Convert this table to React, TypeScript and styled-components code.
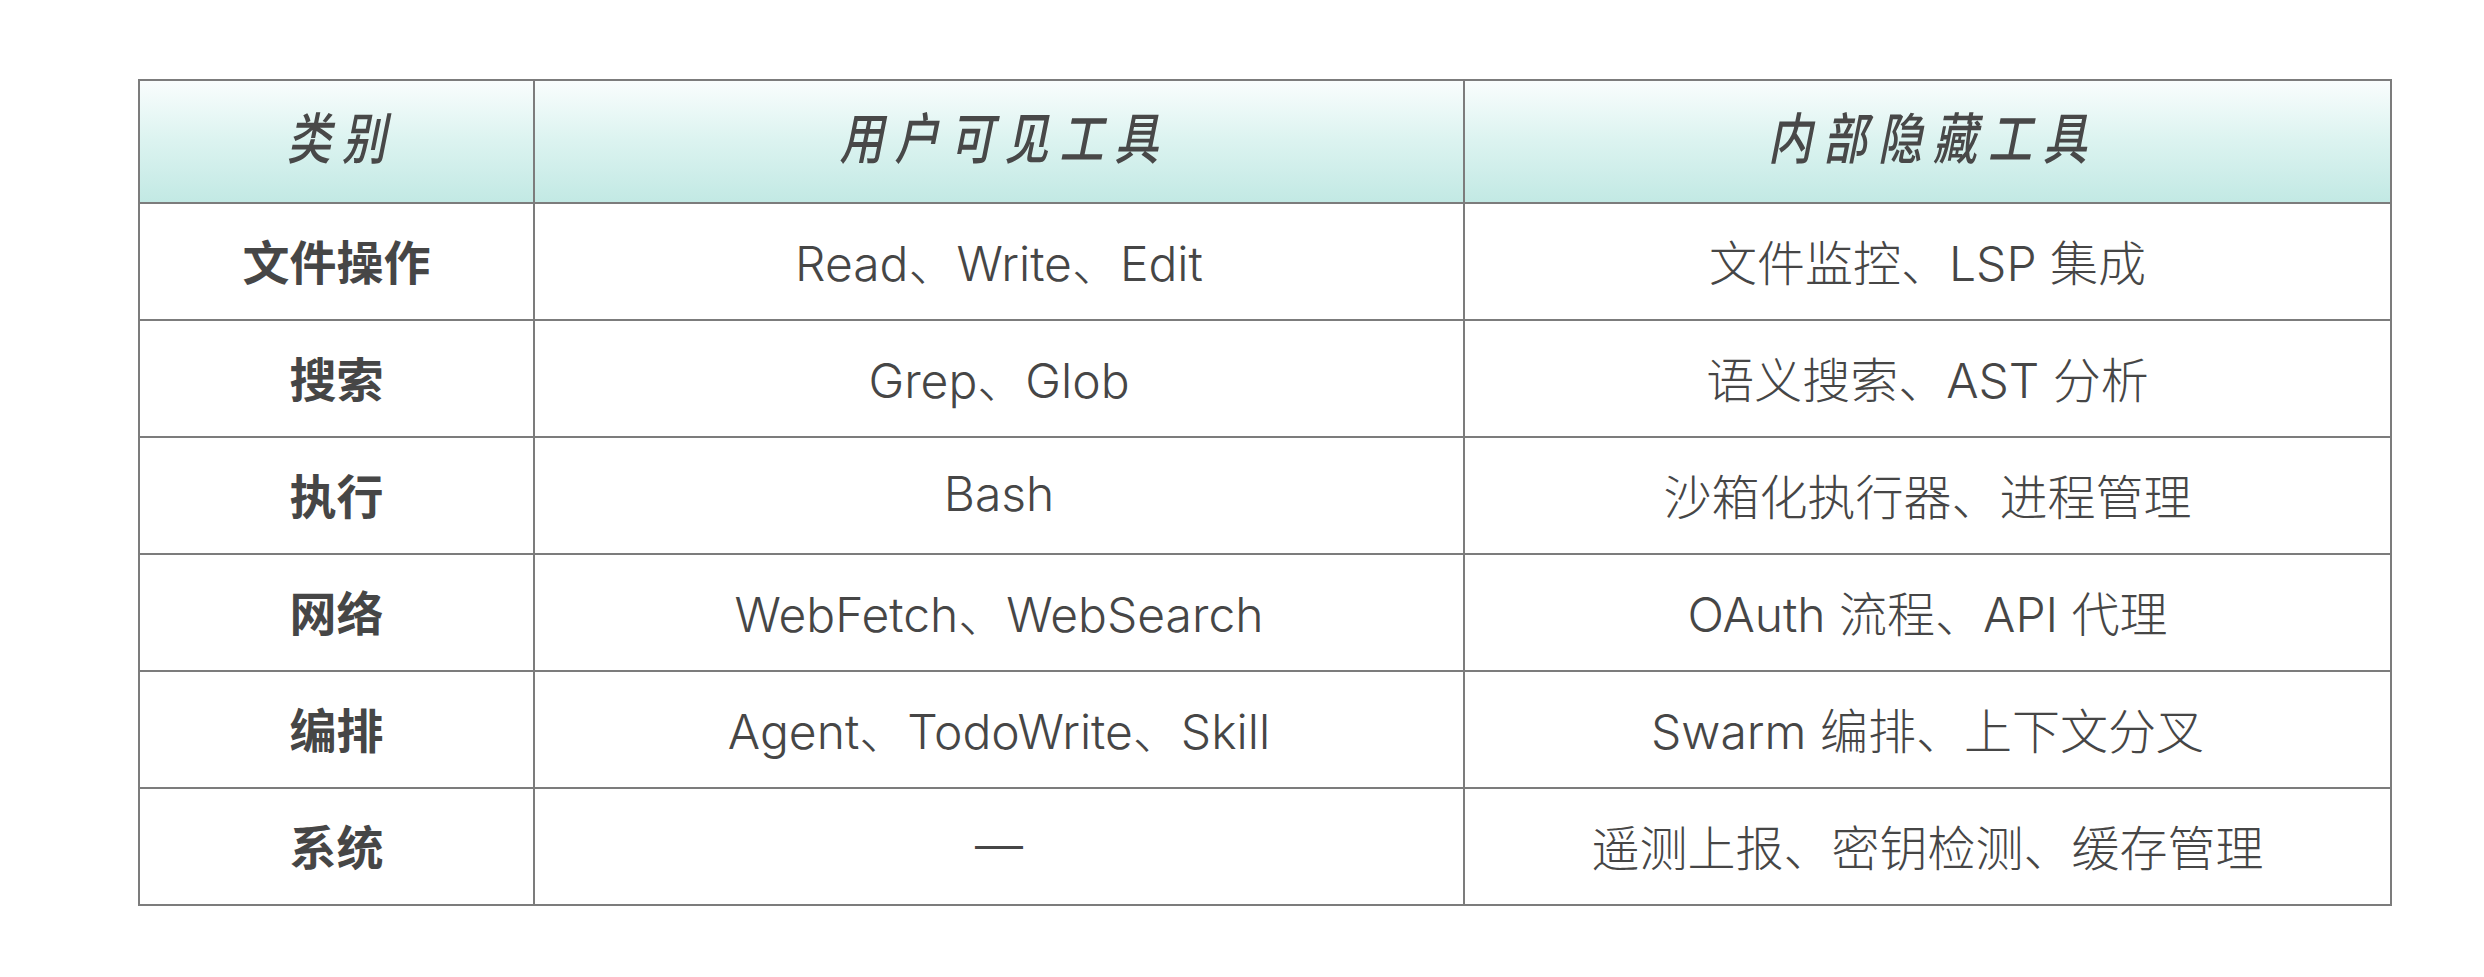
import React from 'react';
import styled, {createGlobalStyle} from 'styled-components';

const GlobalStyle = createGlobalStyle`
    html, body {
        margin: 0;
        padding: 0;
        background: #ffffff;
    }

    body {
        font-family: "Liberation Sans", "Noto Sans CJK SC", sans-serif;
        color: #454545;
    }
`;

const Page = styled.div`
    width: 2484px;
    height: 977px;
    box-sizing: border-box;
    padding: 79px 92px 0 138px;
`;

const Table = styled.div`
    display: grid;
    grid-template-columns: 393px 928px 1fr;
    grid-template-rows: 121px repeat(6, 115px);
    gap: 2px;
    padding: 2px;
    background: #7c7c7c;
`;

const HeadCell = styled.div`
    display: flex;
    align-items: center;
    justify-content: center;
    padding-bottom: 14px;
    box-sizing: border-box;
    background: linear-gradient(to bottom, #f9fdfd 0%, #def4f1 45%, #c2e9e4 100%);
`;

const HeadText = styled.span`
    font-family: "Noto Sans CJK SC", sans-serif;
    font-size: 44px;
    font-weight: 500;
    font-style: italic;
    letter-spacing: 11px;
    margin-right: -11px;
    color: #484848;
    display: inline-block;
    transform: scaleY(1.26);
`;

const Cell = styled.div<{ $bold?: boolean }>`
    display: flex;
    align-items: center;
    justify-content: center;
    padding-bottom: 4px;
    box-sizing: border-box;
    background: #ffffff;
    font-size: ${props => props.$bold ? '47px' : '48px'};
    font-weight: ${props => props.$bold ? 700 : 300};
    font-family: ${props => props.$bold
        ? '"Noto Sans CJK SC", sans-serif'
        : 'Inter, "Noto Sans CJK SC", sans-serif'};
    color: #464646;
    white-space: nowrap;
`;

const headers = ['类别', '用户可见工具', '内部隐藏工具'];

const rows: [string, string, string][] = [
    ['文件操作', 'Read、Write、Edit', '文件监控、LSP 集成'],
    ['搜索', 'Grep、Glob', '语义搜索、AST 分析'],
    ['执行', 'Bash', '沙箱化执行器、进程管理'],
    ['网络', 'WebFetch、WebSearch', 'OAuth 流程、API 代理'],
    ['编排', 'Agent、TodoWrite、Skill', 'Swarm 编排、上下文分叉'],
    ['系统', '—', '遥测上报、密钥检测、缓存管理'],
];

const App: React.FC = () => {
    return (
        <>
            <GlobalStyle/>
            <Page>
                <Table>
                    {headers.map(h => (
                        <HeadCell key={h}>
                            <HeadText>{h}</HeadText>
                        </HeadCell>
                    ))}
                    {rows.map(([category, visible, hidden]) => (
                        <React.Fragment key={category}>
                            <Cell $bold>{category}</Cell>
                            <Cell>{visible}</Cell>
                            <Cell>{hidden}</Cell>
                        </React.Fragment>
                    ))}
                </Table>
            </Page>
        </>
    );
};

export default App;
